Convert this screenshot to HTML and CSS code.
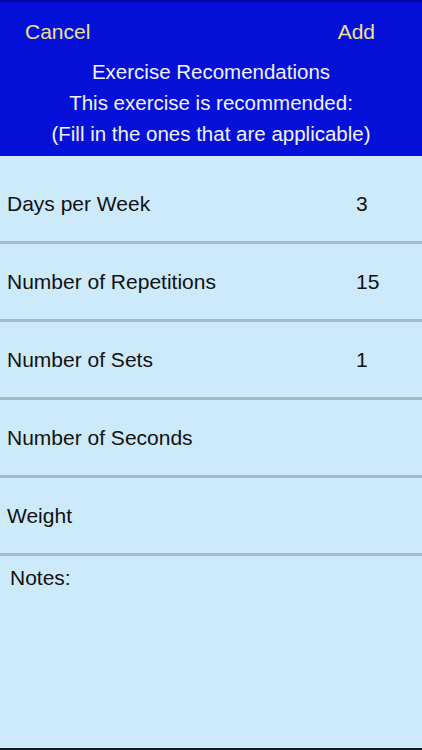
FILE: index.html
```html
<!DOCTYPE html>
<html lang="en">

<head>
    <meta charset="UTF-8">
    <meta name="viewport" content="width=device-width, initial-scale=1.0">
    <title>Exercise Recomendations</title>
    <link rel="stylesheet" href="styles.css">
</head>

<body>
    <div class="screen">
        <div class="header">
            <div class="nav">
                <a href="#" class="nav-btn">Cancel</a>
                <a href="#" class="nav-btn">Add</a>
            </div>
            <div class="title">Exercise Recomendations</div>
            <div class="title">This exercise is recommended:</div>
            <div class="title">(Fill in the ones that are applicable)</div>
        </div>
        <div class="list">
            <div class="row">
                <span class="label">Days per Week</span>
                <span class="value">3</span>
            </div>
            <div class="row">
                <span class="label">Number of Repetitions</span>
                <span class="value">15</span>
            </div>
            <div class="row">
                <span class="label">Number of Sets</span>
                <span class="value">1</span>
            </div>
            <div class="row">
                <span class="label">Number of Seconds</span>
                <span class="value"></span>
            </div>
            <div class="row">
                <span class="label">Weight</span>
                <span class="value"></span>
            </div>
        </div>
        <div class="notes">
            <span class="notes-label">Notes:</span>
        </div>
    </div>
</body>

</html>
```

FILE: styles.css
```css
body {
    font-family: "Liberation Sans", Arial, sans-serif;
    margin: 0;
    padding: 0;
    background-color: #cdeafb;
}

.screen {
    display: flex;
    flex-direction: column;
    height: 750px;
    box-sizing: border-box;
    border-bottom: 2px solid #0c1a26;
}

.header {
    background-color: #0511d9;
    border-top: 2px solid #0008a0;
    padding: 14px 0 7px;
    color: #f2f2f8;
    text-align: center;
}

.nav {
    display: flex;
    justify-content: space-between;
    padding: 0 47px 0 25px;
    height: 31px;
    line-height: 31px;
    margin-bottom: 9px;
}

.nav-btn {
    color: #ece08c;
    font-size: 21px;
    text-decoration: none;
}

.title {
    font-size: 20.5px;
    line-height: 31px;
}

.list {
    padding-top: 10px;
}

.row {
    display: flex;
    align-items: center;
    height: 75px;
    padding-left: 7px;
    border-bottom: 3px solid #a1bccc;
    font-size: 21px;
    color: #111;
}

.label {
    flex: 1;
}

.value {
    width: 66px;
}

.notes {
    flex: 1;
    padding: 10px 0 0 10px;
    border-bottom: 1px solid #e2f2fc;
}

.notes-label {
    font-size: 21px;
    line-height: 24px;
    color: #111;
}
```
